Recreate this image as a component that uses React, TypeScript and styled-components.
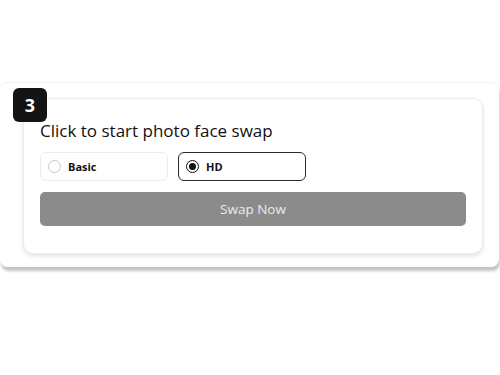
import React, { useState } from "react";
import styled, { createGlobalStyle } from "styled-components";

const Global = createGlobalStyle`
  html, body { margin: 0; padding: 0; background: #ffffff; }
  body { font-family: "Open Sans", "Noto Sans", Arial, sans-serif; }
`;

const Page = styled.div`
  padding-top: 82px;
  width: 500px;
  height: 375px;
  box-sizing: border-box;
  overflow: hidden;
`;

const Panel = styled.div`
  position: relative;
  width: 499px;
  box-sizing: border-box;
  background: #ffffff;
  border-radius: 8px;
  border-top: 1px solid #f1f1f1;
  box-shadow: 1px 4px 3px rgba(0, 0, 0, 0.24);
  padding: 15px 16px 13px 23px;
`;

const Badge = styled.div`
  position: absolute;
  left: 13px;
  top: 5px;
  width: 34px;
  height: 34px;
  border-radius: 6px;
  background: #141414;
  color: #ffffff;
  font-family: "Open Sans", Arial, sans-serif;
  font-weight: 700;
  font-size: 18px;
  display: flex;
  align-items: center;
  justify-content: center;
  z-index: 2;
`;

const Card = styled.div`
  width: 460px;
  box-sizing: border-box;
  background: #ffffff;
  border: 1px solid #ececec;
  border-radius: 10px;
  box-shadow: 0 2px 4px rgba(0, 0, 0, 0.12);
  padding: 20px 16px 27px 16px;
  display: flex;
  flex-direction: column;
`;

const Title = styled.div`
  font-size: 17px;
  line-height: 24px;
  color: #111111;
  margin-bottom: 9px;
`;

const Options = styled.div`
  display: flex;
  gap: 10px;
  margin-bottom: 11px;
`;

const Option = styled.button<{ $active: boolean }>`
  width: 128px;
  height: 29px;
  box-sizing: border-box;
  border-radius: 6px;
  border: 1px solid ${(p) => (p.$active ? "#2a2a2a" : "#ececec")};
  background: #ffffff;
  display: flex;
  align-items: center;
  gap: 7px;
  padding: 0 0 0 7px;
  cursor: pointer;
  font-family: "Open Sans", Arial, sans-serif;
  font-weight: 700;
  font-size: 11px;
  color: #111111;
`;

const Radio = styled.span<{ $active: boolean }>`
  width: 13px;
  height: 13px;
  box-sizing: border-box;
  border-radius: 50%;
  border: ${(p) => (p.$active ? "1.5px solid #111" : "1px solid #c8c8c8")};
  display: flex;
  align-items: center;
  justify-content: center;
  &::after {
    content: "";
    width: 7px;
    height: 7px;
    border-radius: 50%;
    background: ${(p) => (p.$active ? "#111" : "transparent")};
  }
`;

const SwapButton = styled.button`
  width: 426px;
  height: 34px;
  border: none;
  border-radius: 5px;
  background: #8b8b8b;
  color: #ececec;
  font-family: "Open Sans", Arial, sans-serif;
  font-size: 13.5px;
  cursor: pointer;
`;

export default function App() {
  const [mode, setMode] = useState<"basic" | "hd">("hd");
  return (
    <>
      <Global />
      <Page>
        <Panel>
          <Badge>3</Badge>
          <Card>
            <Title>Click to start photo face swap</Title>
            <Options>
              <Option $active={mode === "basic"} onClick={() => setMode("basic")}>
                <Radio $active={mode === "basic"} />
                Basic
              </Option>
              <Option $active={mode === "hd"} onClick={() => setMode("hd")}>
                <Radio $active={mode === "hd"} />
                HD
              </Option>
            </Options>
            <SwapButton>Swap Now</SwapButton>
          </Card>
        </Panel>
      </Page>
    </>
  );
}
